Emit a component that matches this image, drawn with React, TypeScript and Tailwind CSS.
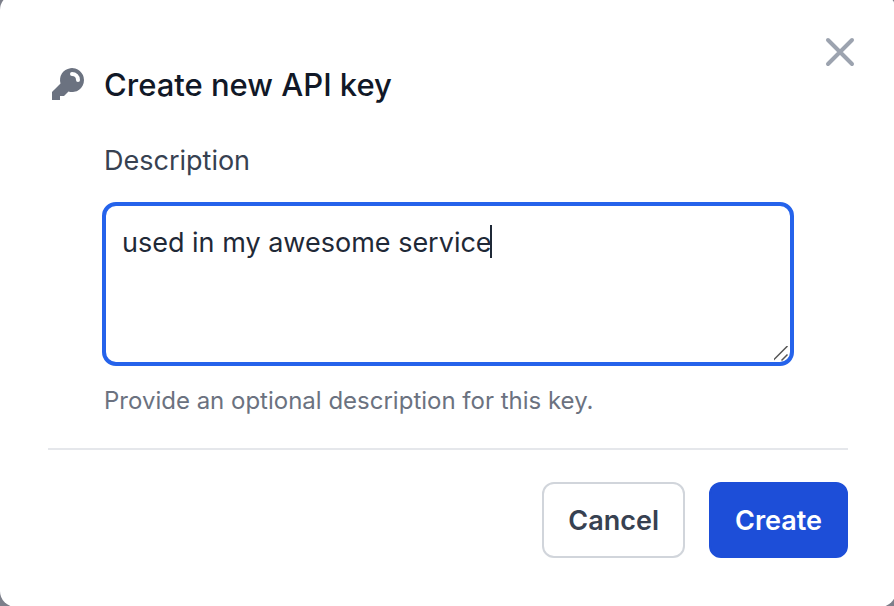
import { useId } from "react";

export default function App() {
  const id = useId();
  return (
    <div className="flex min-h-screen flex-col overflow-hidden bg-[#7c7f8a] font-['Inter',sans-serif]">
      <div role="dialog" aria-labelledby={`${id}-title`} className="relative -mt-1.5 -mr-0.5 -mb-px flex-1 rounded-2xl bg-white px-12 pt-[70px] pb-12">
        <button type="button" aria-label="Close" className="absolute top-[34px] right-8 text-[#9ca3af]">
          <svg className="size-12" viewBox="0 0 24 24" fill="none" stroke="currentColor" strokeWidth="2" strokeLinecap="round" strokeLinejoin="round">
            <path d="M6 18L18 6M6 6l12 12" />
          </svg>
        </button>
        <form>
          <div className="flex items-start gap-4">
            <svg className="size-10 text-[#6b7280]" viewBox="0 0 20 20" fill="currentColor" aria-hidden="true">
              <path fillRule="evenodd" clipRule="evenodd" d="M18 8a6 6 0 01-7.743 5.743L10 14l-1 1-1 1H6v2H2v-4l4.257-4.257A6 6 0 1118 8zm-6-4a1 1 0 100 2 2 2 0 012 2 1 1 0 102 0 4 4 0 00-4-4z" />
            </svg>
            <h2 id={`${id}-title`} className="text-[31px] leading-[42px] font-medium text-[#111827]">Create new API key</h2>
          </div>
          <div className="mx-14 pt-[34px]">
            <label htmlFor={`${id}-desc`} className="block text-[27px] leading-[42px] text-[#374151]">Description</label>
            <div className="relative -mx-0.5 mt-5">
              <textarea id={`${id}-desc`} defaultValue="used in my awesome service" className="block h-[164px] w-full resize rounded-[14px] border-4 border-[#2563eb] p-4 text-[27px] leading-[42px] text-[#1f2937] outline-none [&::-webkit-resizer]:hidden" />
              <span className="pointer-events-none absolute top-[23px] left-[388px] h-[33px] w-0.5 bg-[#1f2937]" />
              <svg className="pointer-events-none absolute right-1 bottom-1 size-4 text-[#555555]" viewBox="0 0 16 16" fill="none" stroke="currentColor" strokeWidth="1.5" aria-hidden="true">
                <path d="M-1 14.500L13.500 0M7.500 14.500L13.500 8.500" />
              </svg>
            </div>
            <p className="mt-3.5 text-2xl leading-[42px] text-[#6b7280]">Provide an optional description for this key.</p>
          </div>
          <div className="mt-[26px] flex justify-end gap-6 border-t-2 border-[#e5e7eb] pt-8">
            <button type="button" className="rounded-xl border-2 border-[#d1d5db] bg-white px-6 pt-4 pb-3.5 text-[27px] leading-[42px] font-semibold text-[#374151]">Cancel</button>
            <button type="submit" className="rounded-xl border-2 border-[#1d4ed8] bg-[#1d4ed8] px-6 pt-4 pb-3.5 text-[27px] leading-[42px] font-semibold text-white">Create</button>
          </div>
        </form>
      </div>
    </div>
  );
}
